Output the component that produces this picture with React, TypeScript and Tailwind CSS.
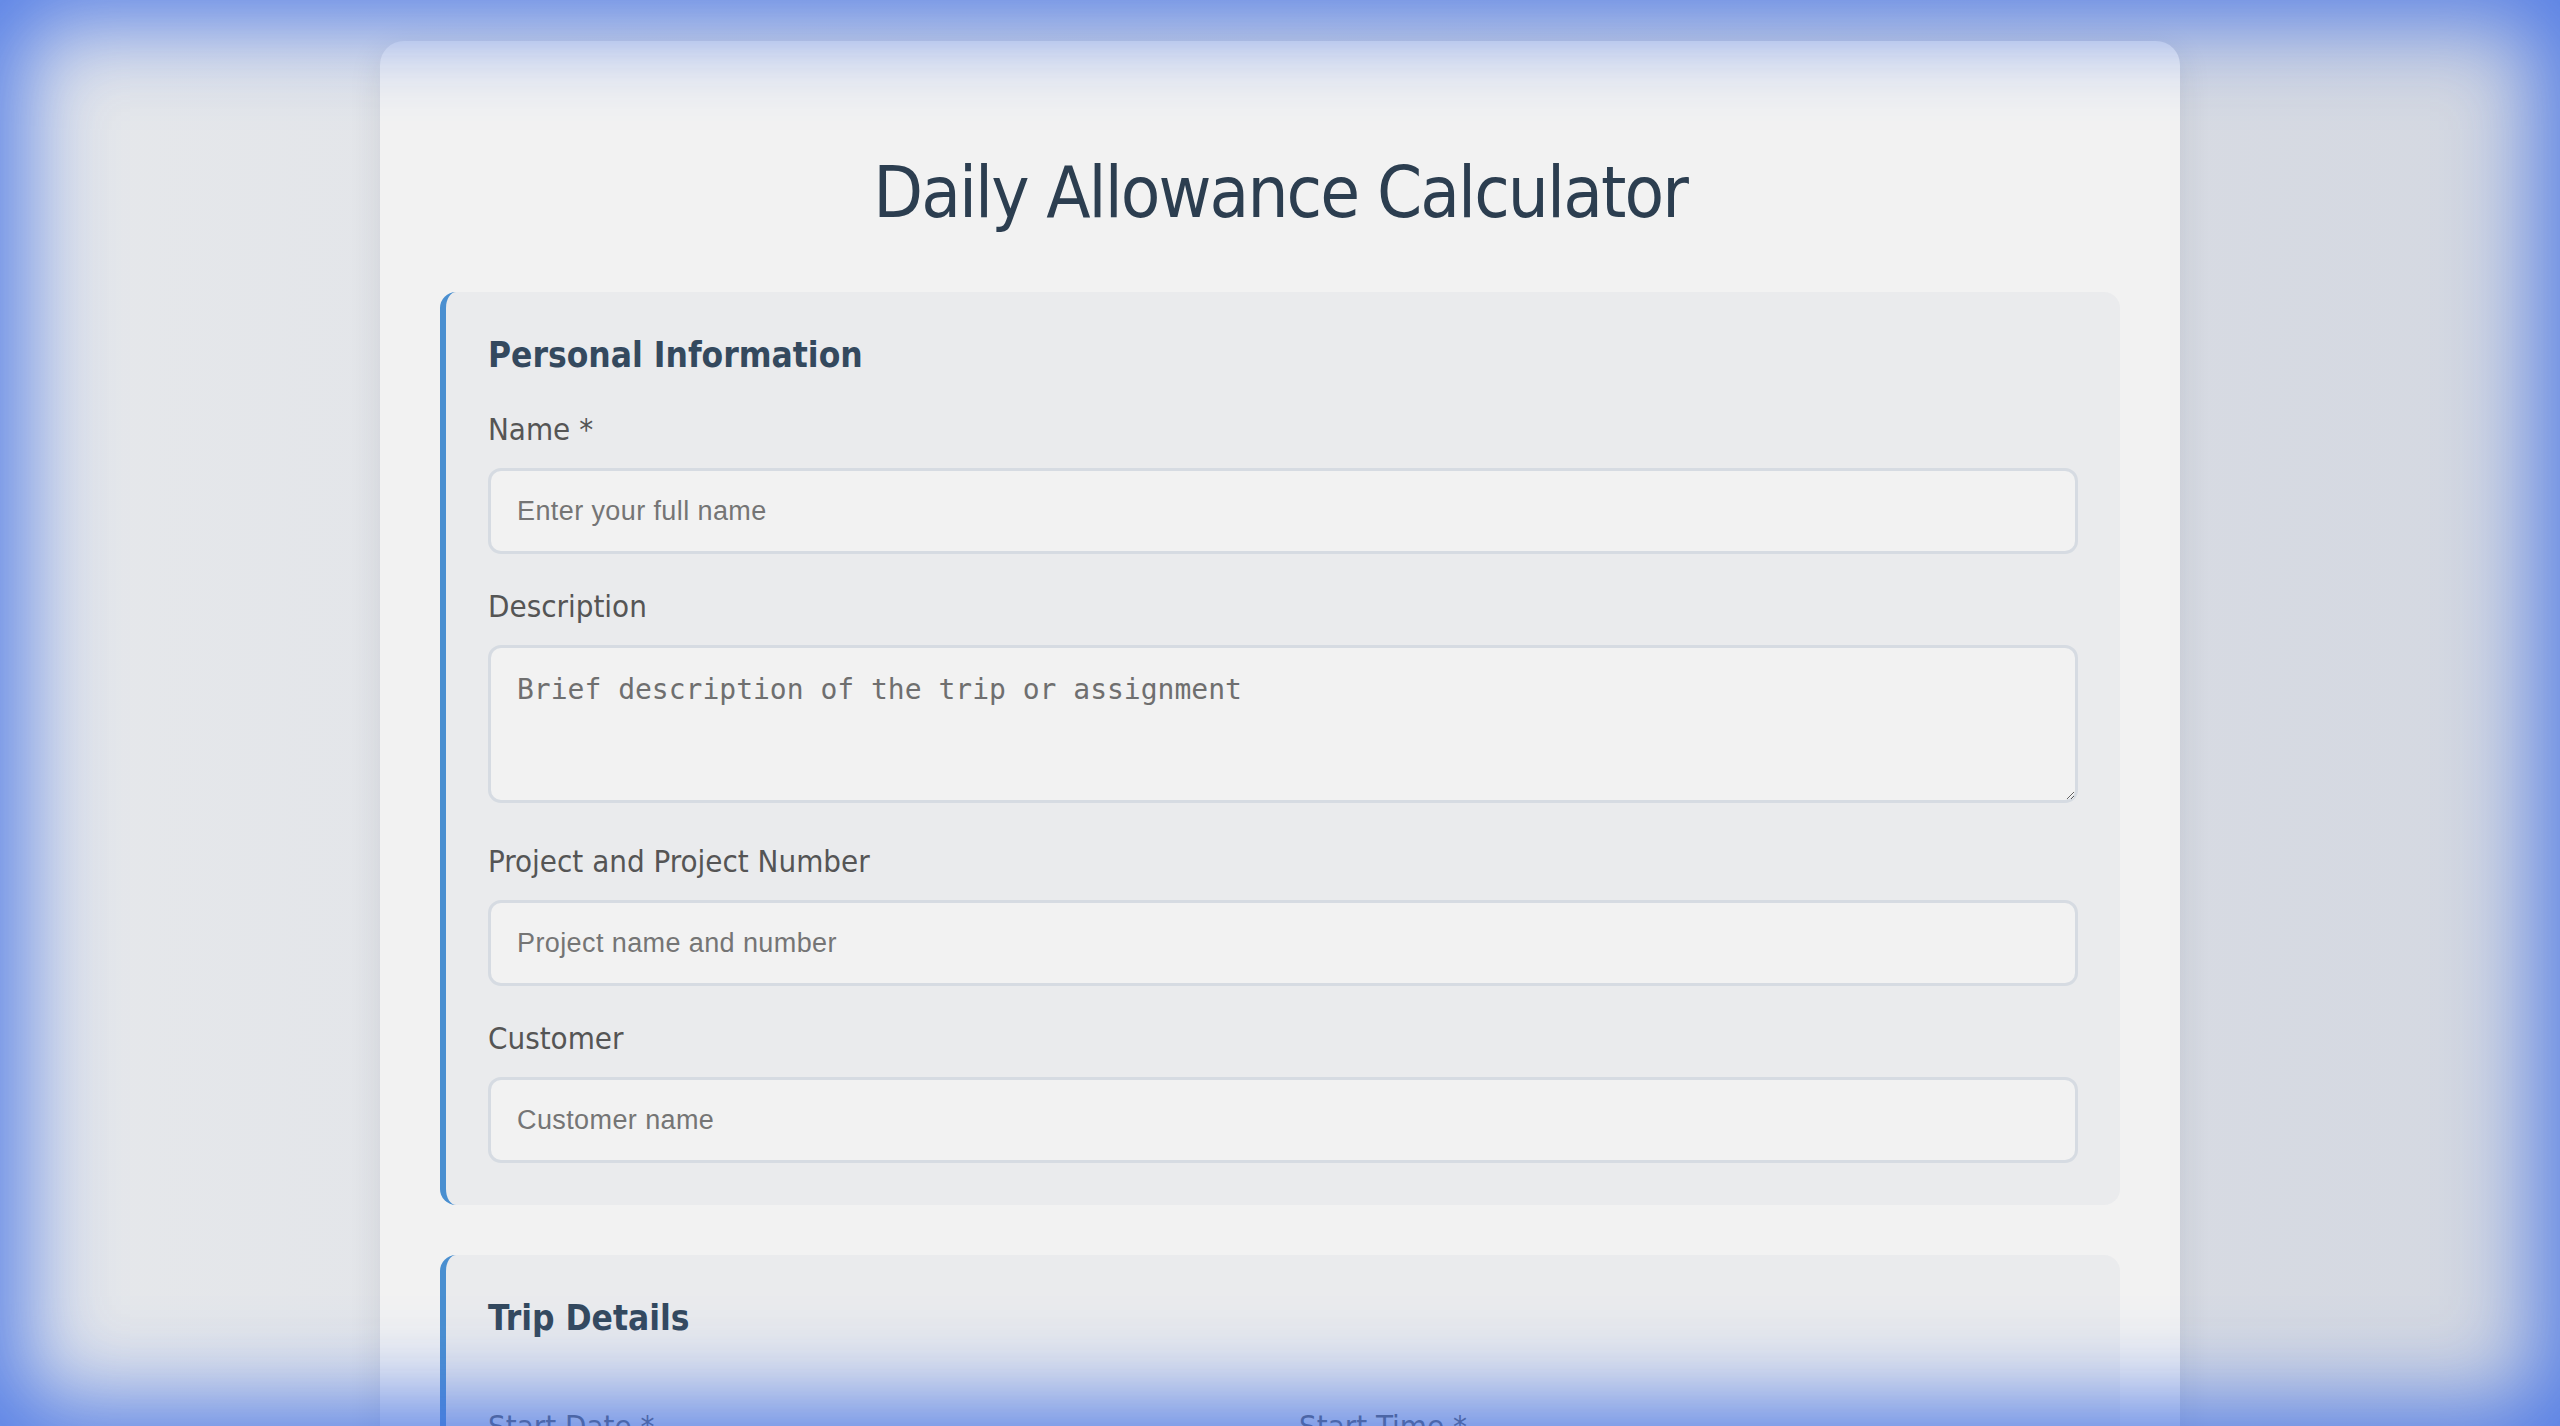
import React from 'react';

const labelCls = 'block mb-[20px] text-[31px] leading-[37px] text-[#555555]';
const inputCls =
  "block w-full h-[86px] rounded-[13px] border-[3px] border-[#d6dbe2] bg-[#f2f2f2] px-[26px] font-['Liberation_Sans',Arial,sans-serif] text-[27px] tracking-[0.4px] text-[#333] placeholder:text-[#757575] outline-none";

function Field({ label, placeholder, type = 'text' }: { label: string; placeholder?: string; type?: string }) {
  return (
    <div className="mb-[34px]">
      <label className={labelCls}>{label}</label>
      <input type={type} placeholder={placeholder} className={inputCls} />
    </div>
  );
}

export default function App() {
  return (
    <div className="relative min-h-screen bg-linear-to-r from-[#e6e8eb] to-[#d4d8e1] pt-[41px] pb-[60px] font-['DejaVu_Sans_Condensed','DejaVu_Sans',sans-serif] font-stretch-condensed">
      <div className="mx-auto w-[1800px] rounded-[24px] bg-[#f2f2f2] px-[60px] pt-[60px] pb-[60px] shadow-[0_8px_32px_rgba(40,50,70,0.12)]">
        <h1 className="mt-[48px] mb-[57px] text-center text-[72px] leading-[86px] tracking-[-1.9px] font-normal text-[#2c3e50]">
          Daily Allowance Calculator
        </h1>

        {/* Personal information */}
        <section className="mb-[50px] rounded-[16px] border-l-[6px] border-[#4a8fd0] bg-[#eaebed] px-[42px] pt-[42px] pb-[8px]">
          <h2 className="mb-[35px] text-[35px] leading-[42px] font-bold text-[#34495e]">Personal Information</h2>
          <Field label="Name *" placeholder="Enter your full name" />
          <div className="mb-[40px]">
            <label className={labelCls}>Description</label>
            <textarea
              placeholder="Brief description of the trip or assignment"
              className="block w-full h-[158px] rounded-[13px] border-[3px] border-[#d6dbe2] bg-[#f2f2f2] px-[26px] pt-[21px] font-['DejaVu_Sans_Mono',monospace] text-[28px] text-[#333] placeholder:text-[#6f6f6f] outline-none"
            />
          </div>
          <Field label="Project and Project Number" placeholder="Project name and number" />
          <Field label="Customer" placeholder="Customer name" />
        </section>

        {/* Trip details */}
        <section className="rounded-[16px] border-l-[6px] border-[#4a8fd0] bg-[#eaebed] px-[42px] pt-[42px] pb-[8px]">
          <h2 className="mb-[69px] text-[35px] leading-[42px] font-bold text-[#34495e]">Trip Details</h2>
          <div className="grid grid-cols-2 gap-x-[32px]">
            <Field label="Start Date *" type="date" />
            <Field label="Start Time *" type="time" />
            <Field label="End Date *" type="date" />
            <Field label="End Time *" type="time" />
          </div>
          <Field label="Destination Country" placeholder="Country of destination" />
        </section>
      </div>

      {/* edge glow */}
      <div className="pointer-events-none fixed inset-0 z-50 shadow-[inset_0_0_88px_24px_rgba(70,115,230,0.9)]" />
    </div>
  );
}
